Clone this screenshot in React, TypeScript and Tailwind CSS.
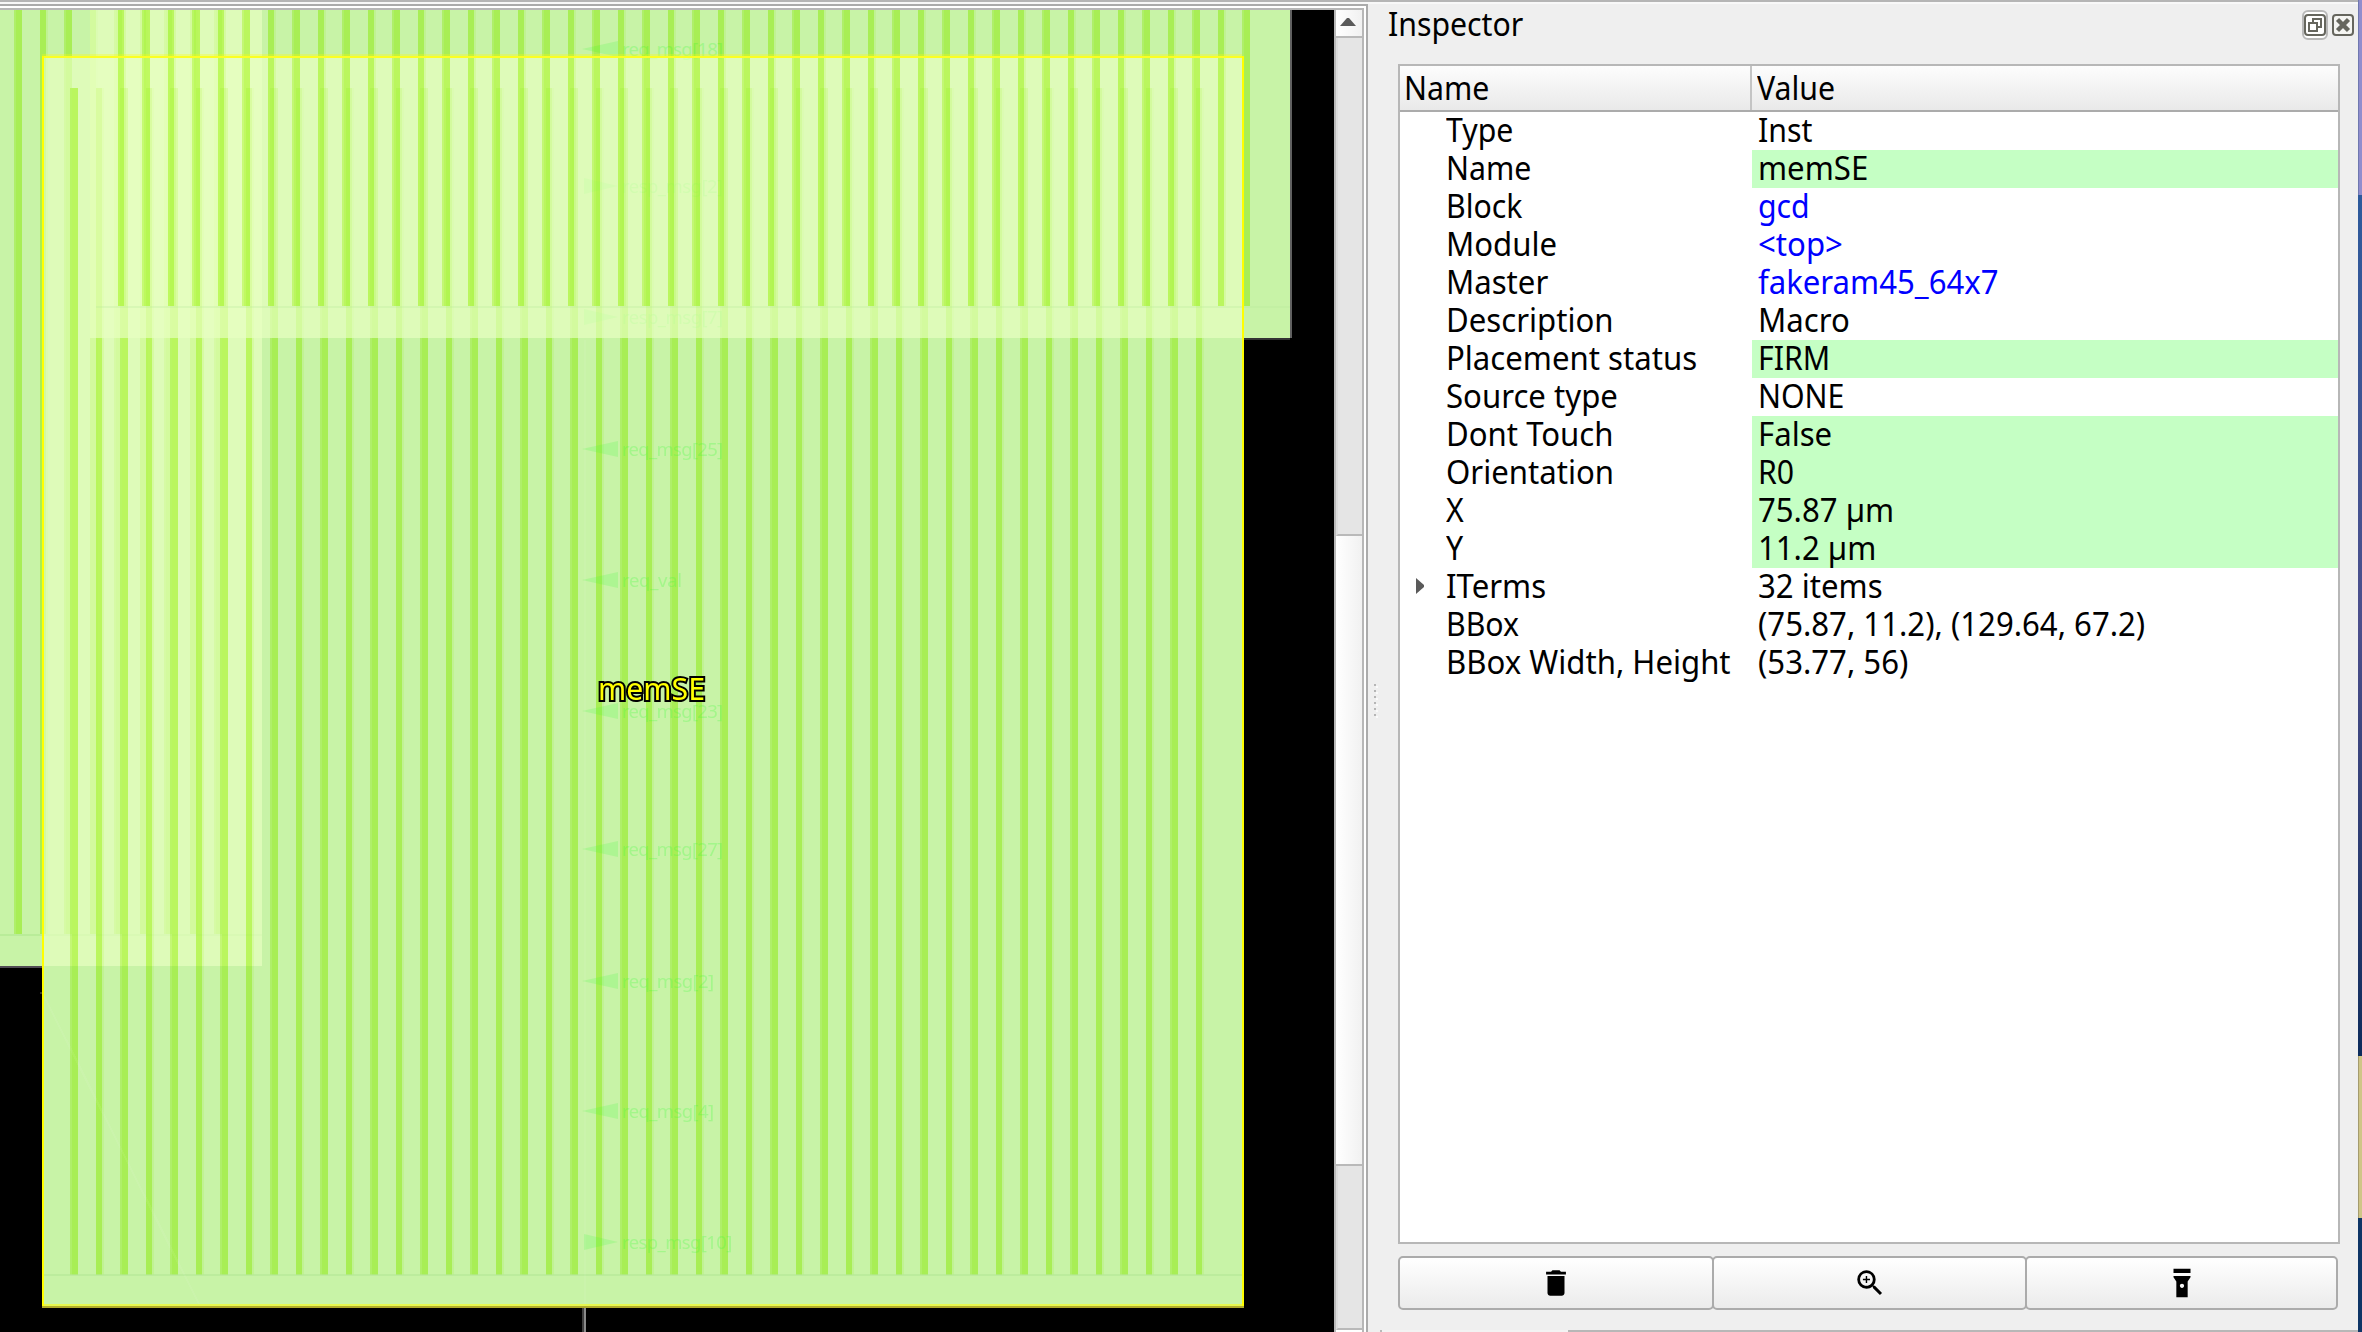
import type { ReactNode } from "react";
import { MdDelete, MdZoomIn, MdFlashlightOn } from "react-icons/md";

type Row = {
  name: string;
  value: string;
  editable?: boolean;
  link?: boolean;
  expandable?: boolean;
};

const rows: Row[] = [
  { name: "Type", value: "Inst" },
  { name: "Name", value: "memSE", editable: true },
  { name: "Block", value: "gcd", link: true },
  { name: "Module", value: "<top>", link: true },
  { name: "Master", value: "fakeram45_64x7", link: true },
  { name: "Description", value: "Macro" },
  { name: "Placement status", value: "FIRM", editable: true },
  { name: "Source type", value: "NONE" },
  { name: "Dont Touch", value: "False", editable: true },
  { name: "Orientation", value: "R0", editable: true },
  { name: "X", value: "75.87 µm", editable: true },
  { name: "Y", value: "11.2 µm", editable: true },
  { name: "ITerms", value: "32 items", expandable: true },
  { name: "BBox", value: "(75.87, 11.2), (129.64, 67.2)" },
  { name: "BBox Width, Height", value: "(53.77, 56)" },
];

const pins = [
  { label: "req_msg[18]", y: 49, out: false },
  { label: "resp_msg[2]", y: 186, out: true },
  { label: "resp_msg[7]", y: 317, out: true },
  { label: "req_msg[25]", y: 449, out: false },
  { label: "req_val", y: 580, out: false },
  { label: "req_msg[23]", y: 711, out: false },
  { label: "req_msg[27]", y: 849, out: false },
  { label: "req_msg[2]", y: 981, out: false },
  { label: "req_msg[4]", y: 1111, out: false },
  { label: "resp_msg[10]", y: 1242, out: true },
];

/* Vertical power stripes of a macro, 25px apart. "wide" marks the phase whose soft edge is on the left. */
function Stripes({ x, count, top, bottom, wide }: { x: number; count: number; top: number; bottom: number; wide: boolean }) {
  return (
    <g className="mix-blend-multiply" fill="#d6fa82">
      {Array.from({ length: count }, (_, i) => {
        const even = (i % 2 === 0) === wide;
        const sx = x + Math.floor(i / 2) * 50 + (i % 2) * (wide ? 26 : 24);
        return (
          <g key={i}>
            <rect x={even ? sx + 2 : sx} y={top} width="6" height={bottom - top} />
            <rect x={even ? sx : sx + 6} y={top} width="2" height={bottom - top} opacity={even ? 0.75 : 0.25} />
          </g>
        );
      })}
    </g>
  );
}

function LayoutCanvas() {
  return (
    <svg className="block h-[1322px] w-[1334px] bg-black" viewBox="0 10 1334 1322" shapeRendering="crispEdges">
      <g fill="#c8f3a7">
        <rect x="0" y="10" width="262" height="956" />
        <rect x="42" y="56" width="1202" height="1250" />
        <rect x="90" y="10" width="1200" height="328" />
      </g>
      <rect x="1290" y="10" width="2" height="328" fill="#606060" />
      <rect x="1244" y="338" width="46" height="2" fill="#333" />
      <rect x="0" y="966" width="42" height="2" fill="#504c54" />
      <rect x="40" y="992" width="2" height="2" fill="#333" />

      <Stripes x={14} count={9} top={10} bottom={934} wide />
      <rect x="0" y="934" width="262" height="2" fill="#b9ec99" />

      <rect x="42" y="56" width="220" height="910" fill="#e9ffc2" opacity="0.67" />
      <Stripes x={70} count={46} top={88} bottom={1275} wide />
      <rect x="44" y="1274" width="1198" height="2" fill="#b4e896" opacity="0.6" />

      <g fill="#3cff3c" shapeRendering="auto">
        {pins.map((p) => (
          <g key={p.label}>
            <path
              opacity="0.19"
              d={p.out ? `M584 ${p.y - 8}V${p.y + 8}L618 ${p.y}Z` : `M618 ${p.y - 8}V${p.y + 8}L582 ${p.y}Z`}
            />
            <text
              x="622"
              y={p.y + 7}
              opacity="0.26"
              fontSize="18.5"
              fontFamily="'Noto Sans', sans-serif"
              textLength={p.label === "req_val" ? 60 : p.label.length * 9.2}
            >
              {p.label}
            </text>
          </g>
        ))}
      </g>
      <path d="M44 996L200 1306" stroke="#fff" strokeOpacity="0.06" strokeWidth="2" />
      <rect x="584" y="340" width="2" height="964" fill="#fff" opacity="0.06" />

      <g fill="#e9ffc2" opacity="0.67">
        <rect x="90" y="10" width="172" height="46" />
        <rect x="90" y="56" width="1152" height="282" />
      </g>
      <Stripes x={118} count={46} top={10} bottom={306} wide={false} />
      <rect x="96" y="306" width="1194" height="2" fill="#b4e896" opacity="0.25" />

      <rect x="42" y="54" width="1200" height="2" fill="#ffff00" opacity="0.3" />
      <rect x="42" y="56" width="1202" height="2" fill="#fbff22" />
      <rect x="42" y="56" width="2" height="1250" fill="#ffff00" />
      <rect x="1242" y="56" width="2" height="1250" fill="#ffff00" />
      <rect x="44" y="1304" width="1198" height="2" fill="#e6f850" />
      <rect x="42" y="1306" width="1202" height="2" fill="#b0ac2c" />

      <rect x="582" y="1308" width="2" height="24" fill="#404040" />
      <rect x="584" y="1308" width="2" height="24" fill="#8a8a8a" />

      <text
        x="598"
        y="700"
        fontSize="31"
        fontFamily="'Noto Sans', sans-serif"
        textLength="107"
        lengthAdjust="spacingAndGlyphs"
        fill="#ffff00"
        stroke="#000"
        strokeWidth="4"
        paintOrder="stroke"
        shapeRendering="auto"
      >
        memSE
      </text>
    </svg>
  );
}

function ScrollBar() {
  return (
    <div className="flex h-[1322px] w-[28px] shrink-0 flex-col border-l-2 border-[#b9b9b9]">
      <div className="flex h-[28px] shrink-0 items-start justify-center border-b-2 border-[#b9b9b9] bg-linear-to-r from-white to-[#f1f1f1] pt-2">
        <svg className="-ml-[2px] h-[8px] w-[16px]" viewBox="0 0 16 8">
          <path d="M0 8L7 0H9L16 8Z" fill="#5a5a5a" />
        </svg>
      </div>
      <div className="h-[498px] shrink-0 border-b-2 border-l-2 border-b-[#b9b9b9] border-l-[#dcdcdc] bg-[#e5e5e5]" />
      <div className="h-[630px] shrink-0 border-b-2 border-[#b9b9b9] bg-linear-to-r from-white to-[#f1f1f1]" />
      <div className="h-[164px] shrink-0 border-b-2 border-l-2 border-b-[#b9b9b9] border-l-[#dcdcdc] bg-[#e5e5e5]" />
      <div className="grow bg-white" />
    </div>
  );
}

/* Short words sit a little tighter than long names and numbers. */
function Label({ children, wide }: { children: ReactNode; wide?: boolean }) {
  return (
    <span className={`inline-block origin-left whitespace-pre ${wide ? "scale-x-[0.973]" : "scale-x-[0.945]"}`}>
      {children}
    </span>
  );
}

function PanelButton({ children, className }: { children: ReactNode; className: string }) {
  return (
    <button
      className={`flex h-[54px] shrink-0 items-center justify-center rounded-[5px] border-2 border-[#ababab] bg-linear-to-b from-white to-[#ebebeb] text-black ${className}`}
    >
      {children}
    </button>
  );
}

function Inspector() {
  return (
    <div className="flex w-[990px] shrink-0 flex-col bg-[#efefef]">
      <div className="flex h-[60px] items-start justify-between pr-1 pl-5">
        <h1 className="mt-[1px] text-[32px] leading-[38px]">
          <Label>Inspector</Label>
        </h1>
        <div className="mt-[6px] flex items-center gap-1">
          <div className="rounded-[6px] border-2 border-[#b9b9b9] bg-white py-[2px]">
            <svg className="block h-[22px] w-[22px]" viewBox="0 0 22 22" fill="none" stroke="#66665e" strokeWidth="2">
              <rect x="1" y="1" width="20" height="20" rx="3" />
              <path d="M9 8V5H17V13H14M5 9H13V17H5Z" />
            </svg>
          </div>
          <svg className="block h-[22px] w-[22px]" viewBox="0 0 22 22" fill="none" stroke="#66665e" strokeWidth="2">
            <rect x="1" y="1" width="20" height="20" rx="3" fill="#f5f5f2" />
            <path d="M5.500 5.500L16.500 16.500M16.500 5.500L5.500 16.500" strokeWidth="4.400" />
          </svg>
        </div>
      </div>

      <div className="flex">
        <div className="flex w-[30px] shrink-0 flex-col gap-1 pt-[620px] pl-[6px]">
          {[0, 1, 2, 3, 4, 5].map((i) => (
            <span key={i} className="h-[2px] w-[2px] bg-[#b5b5b5] shadow-[2px_2px_0_#fafafa]" />
          ))}
        </div>
        <div className="w-[942px] shrink-0">
          <div className="h-[1180px] border-2 border-[#b7b7b7] bg-white">
            <div className="flex h-[46px] border-b-2 border-[#ababab] bg-linear-to-b from-[#fdfdfd] to-[#e9e9e9] text-[32px] leading-[44px]">
              <div className="w-[352px] border-r-2 border-[#c4c4c4] pl-[4px]">
                <Label>Name</Label>
              </div>
              <div className="pl-[5px]">
                <Label>Value</Label>
              </div>
            </div>
            {rows.map((row) => (
              <div key={row.name} className="flex h-[38px] text-[32px] leading-[35px]">
                <div className="flex w-[352px] shrink-0">
                  <div className="w-[46px] shrink-0 pt-[10px] pl-4">
                    {row.expandable && (
                      <svg className="block h-[16px] w-[8px]" viewBox="0 0 8 16">
                        <path d="M0 0L8 7V9L0 16Z" fill="#5a5a5a" />
                      </svg>
                    )}
                  </div>
                  <Label wide={row.name.length > 5}>{row.name}</Label>
                </div>
                <div className={`grow pl-[6px] ${row.editable ? "bg-[#c5ffc4]" : ""} ${row.link ? "text-[#0000ff]" : ""}`}>
                  <Label wide={row.value.length > 4}>{row.value}</Label>
                </div>
              </div>
            ))}
          </div>
          <div className="mt-[12px] flex">
            <PanelButton className="w-[316px]">
              <MdDelete size={34} />
            </PanelButton>
            <PanelButton className="-ml-[2px] w-[315px]">
              <MdZoomIn size={34} />
            </PanelButton>
            <PanelButton className="-ml-[2px] w-[313px]">
              <MdFlashlightOn size={34} />
            </PanelButton>
          </div>
        </div>
      </div>

      <div className="mt-auto flex h-[2px] pl-3">
        <div className="w-[2px] bg-[#b9b9b9]" />
        <div className="w-[186px] bg-[#f3f3f3]" />
        <div className="grow bg-[#b7b7b7]" />
      </div>
    </div>
  );
}

export default function App() {
  return (
    <div className="flex h-[1332px] w-[2362px] overflow-hidden bg-[#efefef] font-['Noto_Sans',sans-serif] text-black">
      <div className="flex w-[2358px] shrink-0 flex-col border-t-2 border-[#b5b5b5]">
        <div className="h-[2px] shrink-0 bg-[#f8f8f8]" />
        <div className="flex h-[1328px]">
          <div className="w-[1368px] shrink-0 border-t-2 border-r-2 border-[#ababab] bg-white pt-[2px] pr-[2px]">
            <div className="flex border-t-2 border-r-2 border-[#b7b7b7]">
              <LayoutCanvas />
              <ScrollBar />
            </div>
          </div>
          <Inspector />
        </div>
      </div>
      <div className="flex w-[4px] shrink-0 flex-col">
        <div className="h-[195px] border-l border-[#6f78b0] bg-[#908dcd]" />
        <div className="h-[861px] bg-linear-to-b from-[#2c5a9c] via-[#4c4f8c] to-[#0c2c5c]" />
        <div className="h-[162px] border-l border-[#a59c6e] bg-[#cfc587]" />
        <div className="grow bg-[#0e3566]" />
      </div>
    </div>
  );
}
